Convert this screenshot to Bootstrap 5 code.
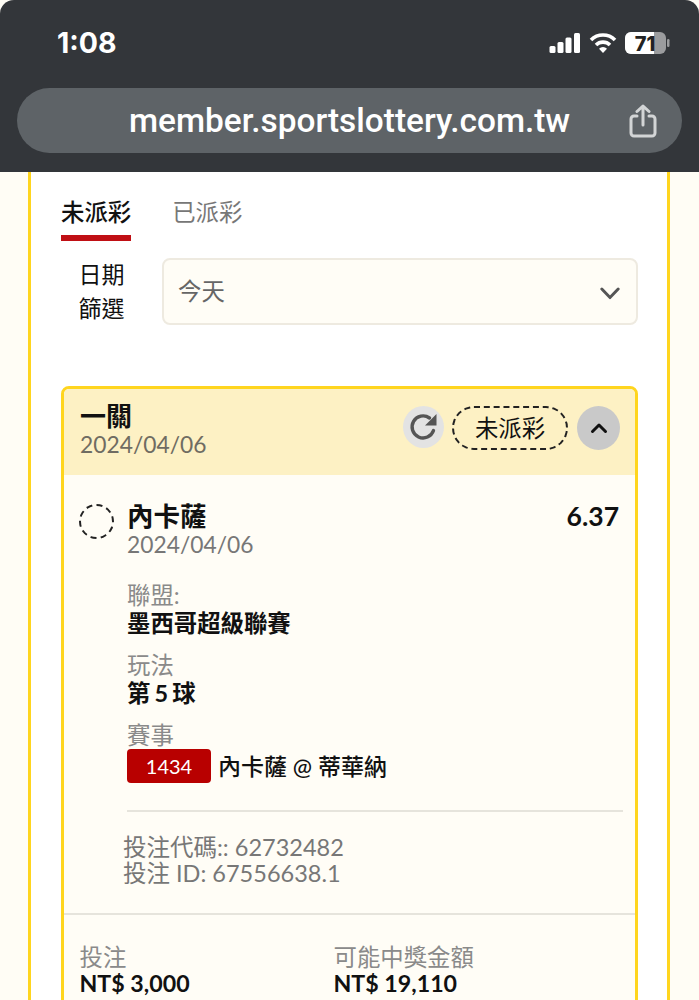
<!DOCTYPE html>
<html lang="zh-Hant">
<head>
<meta charset="utf-8">
<title>投注記錄</title>
<link href="https://cdn.jsdelivr.net/npm/bootstrap@5.3.0/dist/css/bootstrap.min.css" rel="stylesheet">
<style>
html,body{height:1000px;overflow:hidden}
body{background:#fffdf5;font-family:Lato,"Noto Sans CJK TC",sans-serif;color:#111;font-size:24px;line-height:28px}
.phone-bar{background:#33363a;height:172px;border-radius:14px 14px 0 0;padding:0 17px;color:#fff}
.status-row{height:88px;padding:0 11px 2px 40px}
.clock{font-family:Inter,sans-serif;font-weight:700;font-size:28.500px}
.status-icons{gap:8px}
.url-pill{height:65px;background:#5e6367;border-radius:33px;padding:0 25px 0 112px;font-family:Roboto,sans-serif;font-size:33.400px;font-weight:500}
.outer-panel{margin:0 29px 0 28px;background:#fff;border-left:3px solid #ffd51e;border-right:3px solid #ffd51e;padding:0 29px 0 30px}
.tab-row{padding-top:23px;gap:41px;margin-bottom:16px}
.tab-item{color:#777;font-size:23.400px;line-height:34px;height:46px;padding:0}
.tab-item.on{color:#111;font-weight:500;border-bottom:6px solid #c00f14}
.filter-label{width:101px;flex:none;text-align:center;line-height:34px;font-size:23px;padding-right:20px}
.filter-select{height:67px;background-color:#fffdf6;border:2px solid #eeeae0;border-radius:8px;font-size:23.400px;color:#666;padding:2px 14px 0;background-image:url("data:image/svg+xml,%3csvg xmlns='http://www.w3.org/2000/svg' viewBox='0 0 22 14'%3e%3cpath fill='none' stroke='%23555' stroke-width='3.200' stroke-linecap='round' stroke-linejoin='round' d='M2 2l9 9.500L20 2'/%3e%3c/svg%3e");background-size:20px 13px;background-position:right 16px top 27px}
.slip{margin-top:61px;border:3px solid #ffd51e;border-radius:8px;background:#fffdf6;--bs-card-bg:#fffdf6}
.slip-head{background:#fdf1c4;height:86px;border:0;border-radius:5px 5px 0 0!important;padding:13px 15px 0 16px}
.slip-title{font-weight:700;font-size:26px;line-height:29px}
.date-text{color:#6f6c62;font-size:22.800px;line-height:27px}
.circle-btn{width:41px;height:42px;border-radius:50%;background:#e3e3e3;border:0;padding:0}
.circle-btn.dark{width:43px;height:44px;background:#c9c9c9}
.state-pill{width:116px;height:44px;border:2px dashed #222;border-radius:22px;font-size:23.400px;margin:0 9px 0 8px}
.slip-body{padding:0 16px 0 15px}
.pick-row{padding-top:26px}
.ring{width:35px;height:35px;border:2px dashed #222;border-radius:50%;flex:none;margin:3px 13px 0 0}
.pick-name{font-weight:700;font-size:26.500px;line-height:30px}
.pick-date{color:#777;font-size:22.800px;line-height:26px}
.odds{font-weight:700;font-size:26.500px;line-height:30px}
.info-label{color:#8a8a8a;font-size:23.400px;line-height:28px}
.info-value{font-weight:700;font-size:23.400px;line-height:28px}
.tight-words{word-spacing:-1.500px}
.info-block{margin-left:48px}
.info-gap{margin-top:14px}
.game-code{width:84px;height:34px;background:#b80000;color:#fff;border-radius:4px;font-size:20px;line-height:34px;text-align:center;margin-right:7px}
.game-name{font-weight:500;font-size:23px}
.rule{border:0;border-top:2px solid #e6e4dc;opacity:1;margin:27px -4px 22px 48px}
.code-lines{margin-left:44px;color:#777;font-size:23.500px;line-height:26px;padding-bottom:27px}
.slip-foot{border-top:2px solid #e6e4dc;padding:28.500px 15.500px 24px}
.foot-label{color:#8a8a8a;font-size:23.400px;line-height:26px}
.foot-value{font-weight:700;font-size:23.200px;line-height:26px}
.foot-col{width:254px;flex:none}
</style>
</head>
<body>
<div class="phone-bar">
  <div class="status-row d-flex align-items-center justify-content-between">
    <span class="clock">1:08</span>
    <span class="status-icons d-flex align-items-center">
      <svg width="32" height="22" viewBox="0 0 32 22"><g fill="#fff"><rect x="0.500" y="14" width="6" height="7" rx="1.500"/><rect x="8.500" y="10" width="6" height="11" rx="1.500"/><rect x="16.500" y="5.500" width="6" height="15.500" rx="1.500"/><rect x="25" y="1" width="6" height="20" rx="1.500"/></g></svg>
      <svg width="28" height="22" viewBox="0 0 28 22" fill="none" stroke="#fff" stroke-width="3.600"><path d="M2 8a17 17 0 0 1 24 0"/><path d="M7 13a10 10 0 0 1 14 0"/><path d="M14 21l-4-4.200a5.600 5.600 0 0 1 8 0z" fill="#fff" stroke="none"/></svg>
      <svg width="46" height="24" viewBox="0 0 46 24"><rect x="0" y="1" width="41" height="22" rx="6" fill="#9b9c9e"/><path d="M6 1h23v22H6a6 6 0 0 1-6-6V7a6 6 0 0 1 6-6z" fill="#fff"/><rect x="42" y="8" width="2.500" height="8" rx="1.200" fill="#9b9c9e"/><text x="20" y="19.500" text-anchor="middle" font-family="Inter,sans-serif" font-weight="800" font-size="20" fill="#222">71</text></svg>
    </span>
  </div>
  <div class="url-pill d-flex align-items-center justify-content-between">
    <span>member.sportslottery.com.tw</span>
    <svg width="28" height="34" viewBox="0 0 28 34" fill="none" stroke="#d3d5d6" stroke-width="3" stroke-linecap="round" stroke-linejoin="round"><path d="M8 12H5a3 3 0 0 0-3 3v14a3 3 0 0 0 3 3h18a3 3 0 0 0 3-3V15a3 3 0 0 0-3-3h-3"/><path d="M14 21V2M8 7.500L14 2l6 5.500"/></svg>
  </div>
</div>
<div class="outer-panel">
  <div class="nav tab-row">
    <div class="nav-item tab-item on">未派彩</div>
    <div class="nav-item tab-item">已派彩</div>
  </div>
  <div class="d-flex align-items-center">
    <div class="filter-label">日期<br>篩選</div>
    <select class="form-select filter-select"><option>今天</option></select>
  </div>
  <div class="card slip">
    <div class="card-header slip-head d-flex justify-content-between">
      <div>
        <div class="slip-title">一關</div>
        <div class="date-text">2024/04/06</div>
      </div>
      <div class="d-flex align-items-start pt-1">
        <button class="btn circle-btn d-flex align-items-center justify-content-center" aria-label="refresh">
          <svg width="32" height="32" viewBox="0 0 32 32" fill="none"><path d="M25.500 19.500A11 11 0 1 1 21.500 7" stroke="#555" stroke-width="3.400" stroke-linecap="round"/><path d="M28.500 3v11.500H17z" fill="#555"/></svg>
        </button>
        <div class="state-pill d-flex align-items-center justify-content-center">未派彩</div>
        <button class="btn circle-btn dark d-flex align-items-center justify-content-center" aria-label="collapse">
          <svg width="18" height="12" viewBox="0 0 18 12" fill="none"><path d="M2.500 9.500L9 3l6.500 6.500" stroke="#111" stroke-width="3" stroke-linecap="round" stroke-linejoin="round"/></svg>
        </button>
      </div>
    </div>
    <div class="slip-body">
      <div class="pick-row d-flex">
        <div class="ring"></div>
        <div class="flex-grow-1">
          <div class="d-flex justify-content-between">
            <div class="pick-name">內卡薩</div>
            <div class="odds">6.37</div>
          </div>
          <div class="pick-date">2024/04/06</div>
        </div>
      </div>
      <div class="info-block mt-4">
        <div class="info-label">聯盟:</div>
        <div class="info-value">墨西哥超級聯賽</div>
        <div class="info-label info-gap">玩法</div>
        <div class="info-value tight-words">第 5 球</div>
        <div class="info-label info-gap">賽事</div>
        <div class="d-flex align-items-center">
          <span class="game-code">1434</span>
          <span class="game-name">內卡薩 @ 蒂華納</span>
        </div>
      </div>
      <hr class="rule">
      <div class="code-lines"><div>投注代碼:: 62732482</div><div>投注 ID: 67556638.1</div></div>
    </div>
    <div class="slip-foot d-flex">
      <div class="foot-col"><div class="foot-label">投注</div><div class="foot-value">NT$ 3,000</div></div>
      <div class="foot-col"><div class="foot-label">可能中獎金額</div><div class="foot-value">NT$ 19,110</div></div>
    </div>
  </div>
</div>
<script src="https://cdn.jsdelivr.net/npm/bootstrap@5.3.0/dist/js/bootstrap.bundle.min.js"></script>
</body>
</html>
